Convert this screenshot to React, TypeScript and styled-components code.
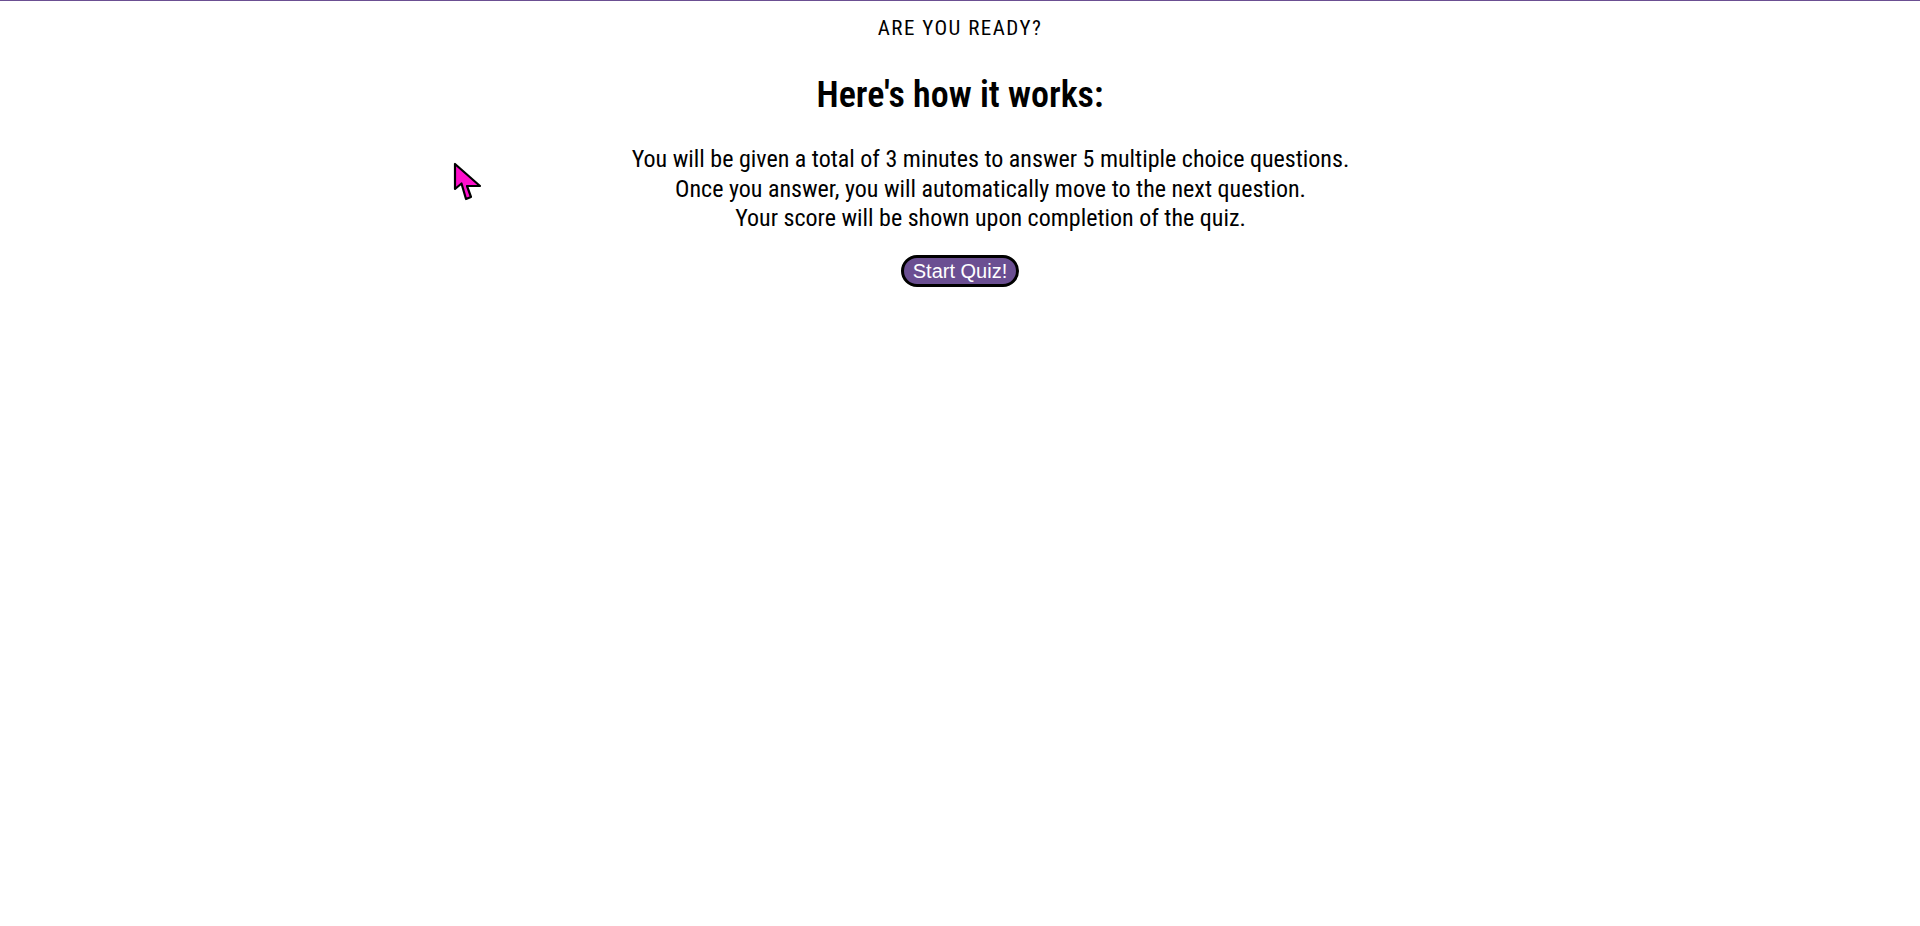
import React from "react";
import styled, { createGlobalStyle } from "styled-components";

const palette = {
  purple: "#6b4f92",
  ink: "#000000",
  cursor: "#ff0fcc",
};

const GlobalStyle = createGlobalStyle`
  html, body {
    margin: 0;
    padding: 0;
    background: #ffffff;
  }
  body {
    font-family: "Roboto Condensed", "Roboto", "Liberation Sans", sans-serif;
    font-stretch: condensed;
    color: ${palette.ink};
  }
`;

const Page = styled.main`
  position: relative;
  min-height: 925px;
  border-top: 1px solid ${palette.purple};
  display: flex;
  flex-direction: column;
  align-items: center;
  text-align: center;
  padding-top: 16px;
`;

const Eyebrow = styled.p`
  margin: 0;
  font-size: 21px;
  line-height: 23px;
  font-weight: 400;
  letter-spacing: 1.5px;
`;

const Heading = styled.h2`
  margin: 34px 0 0;
  font-size: 36px;
  line-height: 42px;
  font-weight: 600;
`;

const Rules = styled.p`
  margin: 29px 0 0;
  padding-left: 61px;
  font-size: 24px;
  line-height: 29.5px;
  font-weight: 400;
`;

const StartButton = styled.button`
  margin-top: 21px;
  height: 32px;
  padding: 0 9px;
  border: 3px solid ${palette.ink};
  border-radius: 16px;
  background: ${palette.purple};
  color: #ffffff;
  font-family: "Liberation Sans", Arial, sans-serif;
  font-stretch: normal;
  font-size: 20px;
  line-height: 1;
  cursor: pointer;
`;

const Pointer = styled.svg`
  position: absolute;
  left: 453px;
  top: 161px;
  pointer-events: none;
`;

const CursorIcon: React.FC = () => (
  <Pointer width="30" height="42" viewBox="0 0 30 42">
    <path
      d="M2 2 L2 27 L8.5 21.5 L13 37 L18 35 L14 24 L27 24 Z"
      fill={palette.cursor}
      stroke="#000"
      strokeWidth="2.2"
      strokeLinejoin="round"
    />
  </Pointer>
);

export default function App() {
  return (
    <>
      <GlobalStyle />
      <Page>
        <Eyebrow>ARE YOU READY?</Eyebrow>
        <Heading>Here's how it works:</Heading>
        <Rules>
          You will be given a total of 3 minutes to answer 5 multiple choice questions.
          <br />
          Once you answer, you will automatically move to the next question.
          <br />
          Your score will be shown upon completion of the quiz.
        </Rules>
        <StartButton type="button">Start Quiz!</StartButton>
        <CursorIcon />
      </Page>
    </>
  );
}
